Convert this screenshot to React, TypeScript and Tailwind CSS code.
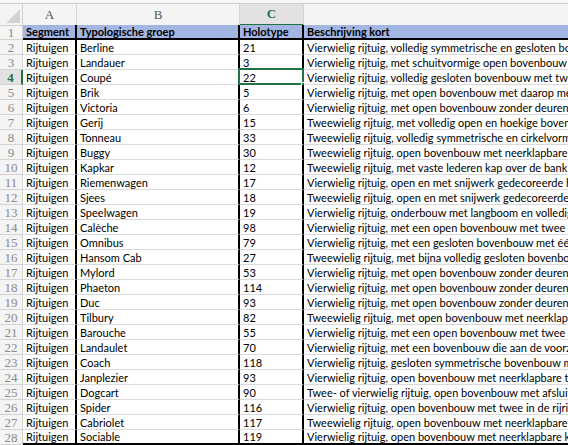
import React from "react";

type Row = [string, string, string, string];

const rows: Row[] = [
  ["Segment", "Typologische groep", "Holotype", "Beschrijving kort"],
  ["Rijtuigen", "Berline", "21", "Vierwielig rijtuig, volledig symmetrische en gesloten bovenbouw met twee deuren"],
  ["Rijtuigen", "Landauer", "3", "Vierwielig rijtuig, met schuitvormige open bovenbouw met twee neerklapbare kappen"],
  ["Rijtuigen", "Coupé", "22", "Vierwielig rijtuig, volledig gesloten bovenbouw met twee deuren en een bok"],
  ["Rijtuigen", "Brik", "5", "Vierwielig rijtuig, met open bovenbouw met daarop meer dere banken"],
  ["Rijtuigen", "Victoria", "6", "Vierwielig rijtuig, met open bovenbouw zonder deuren en aan de achterzijde"],
  ["Rijtuigen", "Gerij", "15", "Tweewielig rijtuig, met volledig open en hoekige bovenbouw met bank"],
  ["Rijtuigen", "Tonneau", "33", "Tweewielig rijtuig, volledig symmetrische en cirkelvormige bovenbouw"],
  ["Rijtuigen", "Buggy", "30", "Tweewielig rijtuig, open bovenbouw met neerklapbare lederen kap"],
  ["Rijtuigen", "Kapkar", "12", "Tweewielig rijtuig, met vaste lederen kap over de bank"],
  ["Rijtuigen", "Riemenwagen", "17", "Vierwielig rijtuig, open en met snijwerk gedecoreerde houten bovenbouw"],
  ["Rijtuigen", "Sjees", "18", "Tweewielig rijtuig, open en met snijwerk gedecoreerde houten bovenbouw"],
  ["Rijtuigen", "Speelwagen", "19", "Vierwielig rijtuig, onderbouw met langboom en volledig in hout"],
  ["Rijtuigen", "Calèche", "98", "Vierwielig rijtuig, met een open bovenbouw met twee deuren en kap"],
  ["Rijtuigen", "Omnibus", "79", "Vierwielig rijtuig, met een gesloten bovenbouw met één deur achter"],
  ["Rijtuigen", "Hansom Cab", "27", "Tweewielig rijtuig, met bijna volledig gesloten bovenbouw en bok"],
  ["Rijtuigen", "Mylord", "53", "Vierwielig rijtuig, met open bovenbouw zonder deuren en aan de"],
  ["Rijtuigen", "Phaeton", "114", "Vierwielig rijtuig, met open bovenbouw zonder deuren en aan de"],
  ["Rijtuigen", "Duc", "93", "Vierwielig rijtuig, met open bovenbouw zonder deuren en aan de"],
  ["Rijtuigen", "Tilbury", "82", "Tweewielig rijtuig, met open bovenbouw met neerklapbare lederen kap"],
  ["Rijtuigen", "Barouche", "55", "Vierwielig rijtuig, met een open bovenbouw met twee deuren en kap"],
  ["Rijtuigen", "Landaulet", "70", "Vierwielig rijtuig, met een bovenbouw die aan de voorzijde gesloten"],
  ["Rijtuigen", "Coach", "118", "Vierwielig rijtuig, gesloten symmetrische bovenbouw met twee deuren"],
  ["Rijtuigen", "Janplezier", "93", "Vierwielig rijtuig, open bovenbouw met neerklapbare toegang achter"],
  ["Rijtuigen", "Dogcart", "90", "Twee- of vierwielig rijtuig, open bovenbouw met afsluitbare kist"],
  ["Rijtuigen", "Spider", "116", "Vierwielig rijtuig, open bovenbouw met twee in de rijrichting geplaatste"],
  ["Rijtuigen", "Cabriolet", "117", "Tweewielig rijtuig, open bovenbouw met neerklapbare lederen kap"],
  ["Rijtuigen", "Sociable", "119", "Vierwielig rijtuig, open bovenbouw met neerklapbare kap aan de"],
];

// column D is wide in the sheet, so its letter sits off screen
const cols = "grid grid-cols-[23px_54px_163px_64px_700px]";
const serif = { fontFamily: '"Liberation Serif", "DejaVu Serif", serif' };
const body = { fontFamily: 'Lato, "Liberation Sans", sans-serif' };

function HeaderRow() {
  return (
    <div className={`${cols} h-[25px] border-t-[3px] border-[#f7f7f7]`}>
      <div className="relative border-r border-b border-[#cfcfcf] bg-[#f4f4f4] border-t border-t-[#d0d0d0]">
        <div className="absolute right-[2px] bottom-[2px] h-0 w-0 border-b-[14px] border-l-[14px] border-b-[#d3d3d3] border-l-transparent" />
      </div>
      {["A", "B", "C", "D"].map((l) => {
        const active = l === "C";
        return (
          <div
            key={l}
            style={serif}
            className={`flex items-center justify-center border-t border-t-[#d0d0d0] border-r border-[#d6d6d6] text-[13px] ${
              active
                ? "border-b-2 border-b-[#217346] bg-[#e2e2e2] font-bold text-[#217346]"
                : "border-b border-b-[#cfcfcf] bg-[#f4f4f4] text-[#555]"
            }`}
          >
            {l}
          </div>
        );
      })}
    </div>
  );
}

function DataRow({ row, index }: { row: Row; index: number }) {
  const n = index + 1;
  const header = n === 1;
  const last = n === rows.length;
  const active = n === 4;
  const bottom = header || last ? "border-b-2 border-b-black" : "border-b border-b-[#dadada]";
  const fill = header ? "bg-[#a3b5e2] font-bold" : "bg-white";

  return (
    <div className={`${cols} h-[15px]`}>
      <div
        style={serif}
        className={`flex items-center justify-center border-b border-b-[#d3d3d3] text-[13px] leading-none ${
          active
            ? "border-r-2 border-r-[#217346] bg-[#e2e2e2] font-bold text-[#217346]"
            : "border-r border-r-[#d3d3d3] bg-[#f4f4f4] text-[#8a8a8a]"
        }`}
      >
        {n}
      </div>
      {row.map((cell, c) => {
        const right = c < 3 ? "border-r-2 border-r-black" : "";
        const selected = active && c === 2;
        return (
          <div
            key={c}
            style={body}
            className={`relative flex items-center whitespace-nowrap pl-[3px] text-[11px] leading-none text-black ${fill} ${bottom} ${right}`}
          >
            <span>{cell}</span>
            {selected && (
              <>
                <div className="pointer-events-none absolute -top-[2px] -left-[2px] -right-[2px] -bottom-[1px] border-2 border-[#217346]" />
                <div className="absolute -right-[4px] -bottom-[3px] h-[5px] w-[5px] border border-white bg-[#217346]" />
              </>
            )}
          </div>
        );
      })}
    </div>
  );
}

export default function App() {
  return (
    <div className="h-[445px] w-[568px] overflow-hidden bg-white">
      <HeaderRow />
      {rows.map((r, i) => (
        <DataRow key={i} row={r} index={i} />
      ))}
    </div>
  );
}
